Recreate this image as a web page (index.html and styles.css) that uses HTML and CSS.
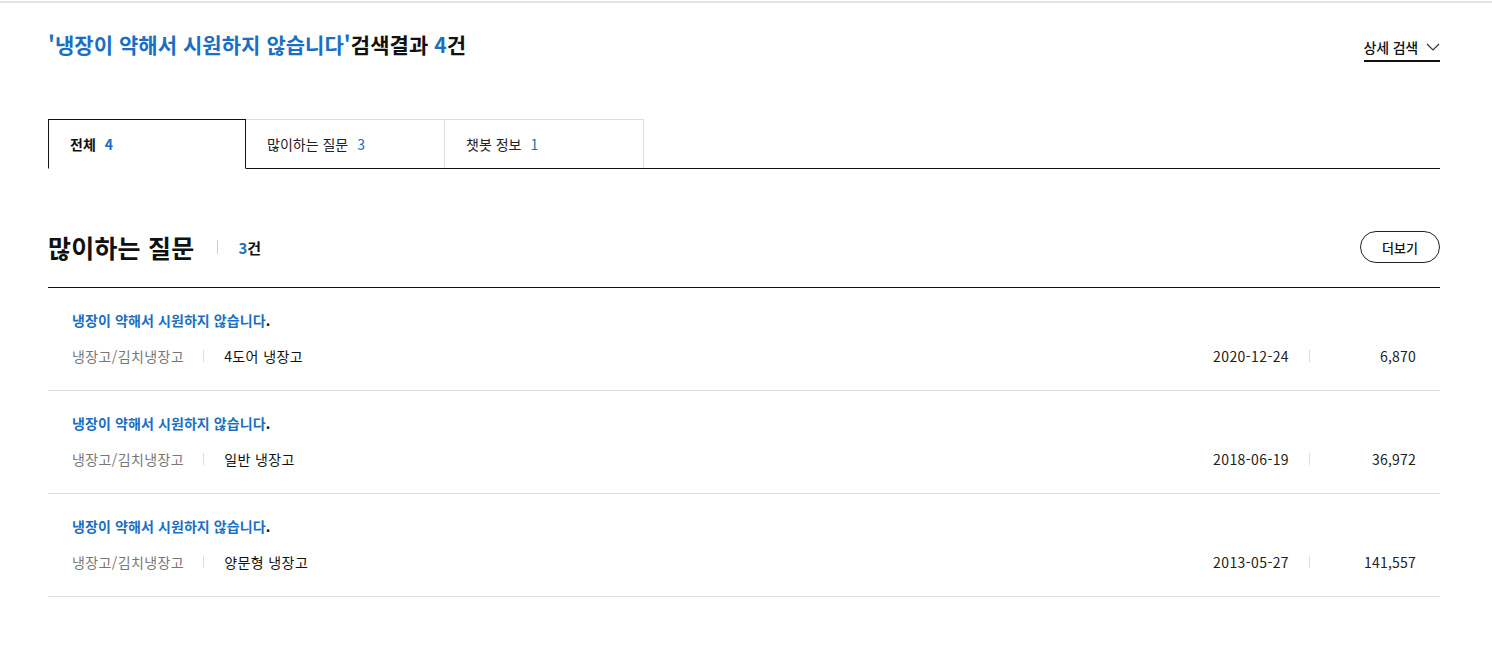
FILE: index.html
```html
<!DOCTYPE html>
<html lang="ko">
<head>
<meta charset="utf-8">
<link rel="stylesheet" href="styles.css">
</head>
<body>
<div class="topline"></div>
<main class="wrap">
  <div class="head">
    <h1 class="title"><span class="blue">'냉장이 약해서 시원하지 않습니다'</span>검색결과 <span class="blue">4</span>건</h1>
    <button class="detail">상세 검색
      <svg width="14" height="8" viewBox="0 0 14 8"><path d="M1 1l6 6 6-6" fill="none" stroke="#333" stroke-width="1.2"/></svg>
    </button>
  </div>
  <div class="tabs">
    <div class="tab active">전체<span class="cnt">4</span></div>
    <div class="tab">많이하는 질문<span class="cnt">3</span></div>
    <div class="tab">챗봇 정보<span class="cnt">1</span></div>
  </div>
  <section class="sec">
    <div class="sec-head">
      <h2 class="sec-title">많이하는 질문</h2>
      <span class="bar"></span>
      <span class="sec-cnt"><span class="blue">3</span>건</span>
      <button class="more">더보기</button>
    </div>
    <ul class="list">
      <li class="item">
        <a class="q"><span class="blue">냉장이 약해서 시원하지 않습니다</span>.</a>
        <div class="meta">
          <span class="cat">냉장고/김치냉장고</span><span class="sep"></span><span class="sub">4도어 냉장고</span>
          <span class="date">2020-12-24</span><span class="sep2"></span><span class="views">6,870</span>
        </div>
      </li>
      <li class="item">
        <a class="q"><span class="blue">냉장이 약해서 시원하지 않습니다</span>.</a>
        <div class="meta">
          <span class="cat">냉장고/김치냉장고</span><span class="sep"></span><span class="sub">일반 냉장고</span>
          <span class="date">2018-06-19</span><span class="sep2"></span><span class="views">36,972</span>
        </div>
      </li>
      <li class="item">
        <a class="q"><span class="blue">냉장이 약해서 시원하지 않습니다</span>.</a>
        <div class="meta">
          <span class="cat">냉장고/김치냉장고</span><span class="sep"></span><span class="sub">양문형 냉장고</span>
          <span class="date">2013-05-27</span><span class="sep2"></span><span class="views">141,557</span>
        </div>
      </li>
    </ul>
  </section>
</main>
</body>
</html>
```

FILE: styles.css
```css
* { box-sizing: border-box; }
html, body { margin: 0; padding: 0; background: #fff; }
body {
  font-family: "Noto Sans CJK KR", "Noto Sans", sans-serif;
  color: #111;
}
.topline { height: 2px; background: #e4e4e4; margin-top: 1px; }
.blue { color: #1a6fc4; }
.wrap { padding: 0 52px 0 48px; }
.head {
  display: flex;
  justify-content: space-between;
  align-items: flex-start;
  padding-top: 26px;
  height: 116px;
}
.title {
  margin: 0;
  font-size: 21px;
  font-weight: 700;
  letter-spacing: 0.05px;
  line-height: 30px;
}
.detail {
  margin-top: 8px;
  background: none;
  border: 0;
  border-bottom: 2px solid #111;
  padding: 0 0 3px 0;
  font-family: inherit;
  font-size: 14px;
  font-weight: 500;
  color: #111;
  display: flex;
  align-items: center;
  gap: 8px;
  letter-spacing: -0.2px;
  line-height: 20px;
}
.tabs {
  display: flex;
  border-bottom: 1px solid #111;
}
.tab {
  width: 199px;
  height: 49px;
  border: 1px solid #ddd;
  border-bottom: 0;
  border-left: 0;
  display: flex;
  align-items: center;
  padding-left: 21px;
  font-size: 14px;
  color: #222;
  letter-spacing: 0;
}
.tab.active {
  width: 198px;
  border: 1px solid #111;
  border-bottom: 1px solid #fff;
  margin-bottom: -1px;
  height: 50px;
  font-weight: 700;
  color: #111;
}
.cnt { color: #1a6fc4; margin-left: 9px; font-weight: 400; }
.tab.active .cnt { font-weight: 700; }
.sec { padding-top: 60px; }
.sec-head {
  display: flex;
  align-items: center;
  height: 36px;
  margin-bottom: 22px;
}
.sec-title {
  margin: 0;
  font-size: 25px;
  font-weight: 700;
  letter-spacing: 0.2px;
}
.bar { width: 1px; height: 14px; background: #ccc; margin: 0 20px 0 23px; }
.sec-cnt { font-size: 15px; font-weight: 700; }
.more {
  margin-left: auto;
  width: 80px;
  height: 32px;
  border: 1px solid #222;
  border-radius: 16px;
  background: #fff;
  font-family: inherit;
  font-size: 13px;
  font-weight: 500;
  color: #111;
}
.list {
  list-style: none;
  margin: 0;
  padding: 0;
  border-top: 1px solid #111;
}
.item {
  height: 103px;
  border-bottom: 1px solid #ddd;
  padding: 21px 24px 0 24px;
}
.q {
  display: block;
  font-size: 14px;
  font-weight: 700;
  letter-spacing: 0.1px;
  line-height: 22px;
}
.meta {
  display: flex;
  align-items: center;
  margin-top: 15px;
  font-size: 14px;
  line-height: 20px;
  letter-spacing: 0.4px;
}
.cat { color: #777; }
.sep { width: 1px; height: 12px; background: #ddd; margin: 0 20px 0 19px; }
.sub { color: #111; }
.date { margin-left: auto; color: #222; }
.sep2 { width: 1px; height: 12px; background: #ddd; margin: 0 0 0 20px; }
.views { width: 106px; text-align: right; color: #222; letter-spacing: 0.2px; }
```
